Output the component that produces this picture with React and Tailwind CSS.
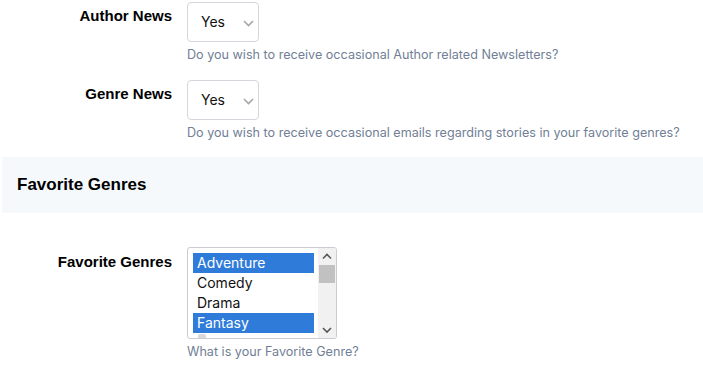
import React from "react";

const Chevron = () => (
  <svg width="11" height="7" viewBox="0 0 11 7" className="absolute left-[55px] top-[17px]">
    <path d="M1 1 L5.5 5.5 L10 1" fill="none" stroke="#a6a6a6" strokeWidth="1.6" />
  </svg>
);

const SelectBox = () => (
  <div className="relative w-[72px] h-[40px] border border-[#d3d6db] rounded-[4px] bg-white">
    <span className="absolute left-[13px] top-[9px] text-[14px] leading-[20px] text-[#111]" style={{ fontFamily: "Inter, sans-serif" }}>Yes</span>
    <Chevron />
  </div>
);

const Label = ({ children, pt }) => (
  <div className={`w-[172px] shrink-0 text-right font-bold text-[15px] leading-[18px] text-black ${pt}`} style={{ fontFamily: "'Liberation Sans', Arial, sans-serif" }}>
    {children}
  </div>
);

const Help = ({ children }) => (
  <div className="mt-[5px] text-[12.6px] leading-[16px] text-[#718096]" style={{ fontFamily: "Inter, sans-serif" }}>{children}</div>
);

const options = [
  { t: "Adventure", s: true },
  { t: "Comedy", s: false },
  { t: "Drama", s: false },
  { t: "Fantasy", s: true },
];

export default function App() {
  return (
    <div className="w-[703px] h-[369px] bg-white overflow-hidden relative">
      <div className="flex pt-[2px]">
        <Label pt="pt-[5px]">Author News</Label>
        <div className="ml-[15px]">
          <SelectBox />
          <Help>Do you wish to receive occasional Author related Newsletters?</Help>
        </div>
      </div>
      <div className="flex mt-[17px]">
        <Label pt="pt-[5px]">Genre News</Label>
        <div className="ml-[15px]">
          <SelectBox />
          <Help>Do you wish to receive occasional emails regarding stories in your favorite genres?</Help>
        </div>
      </div>
      <div className="ml-[2px] mt-[16px] h-[56px] bg-[#f5f9fc] flex items-center pl-[15px]">
        <div className="font-bold text-[17px] leading-[20px] text-black" style={{ fontFamily: "'Liberation Sans', Arial, sans-serif" }}>Favorite Genres</div>
      </div>
      <div className="flex mt-[34px]">
        <Label pt="pt-[6px]">Favorite Genres</Label>
        <div className="ml-[15px]">
          <div className="relative w-[150px] h-[92px] border border-[#c9ccd1] rounded-[3px] bg-white overflow-hidden">
            <div className="absolute left-[5px] top-[5px] w-[121px]" style={{ fontFamily: "Inter, sans-serif" }}>
              {options.map((o) => (
                <div key={o.t} className={`h-[20px] pl-[4px] text-[14px] leading-[20px] ${o.s ? "bg-[#2e7bd9] text-white" : "text-[#111]"}`}>{o.t}</div>
              ))}
            </div>
            <div className="absolute left-[10px] top-[86px] w-[8px] h-[4px] rounded-t-[2px] bg-[#d9d9d9]" />
            <div className="absolute right-0 top-0 w-[18px] h-full bg-[#f1f1f1]">
              <svg width="18" height="14" viewBox="0 0 18 14" className="absolute left-0 top-[2px]">
                <path d="M5 8.5 L9 4.5 L13 8.5" fill="none" stroke="#555" strokeWidth="1.6" />
              </svg>
              <div className="absolute left-[1px] top-[17px] w-[16px] h-[18px] bg-[#c1c1c1]" />
              <svg width="18" height="14" viewBox="0 0 18 14" className="absolute left-0 bottom-[1px]">
                <path d="M5 5 L9 9 L13 5" fill="none" stroke="#555" strokeWidth="1.6" />
              </svg>
            </div>
          </div>
          <Help>What is your Favorite Genre?</Help>
        </div>
      </div>
    </div>
  );
}
